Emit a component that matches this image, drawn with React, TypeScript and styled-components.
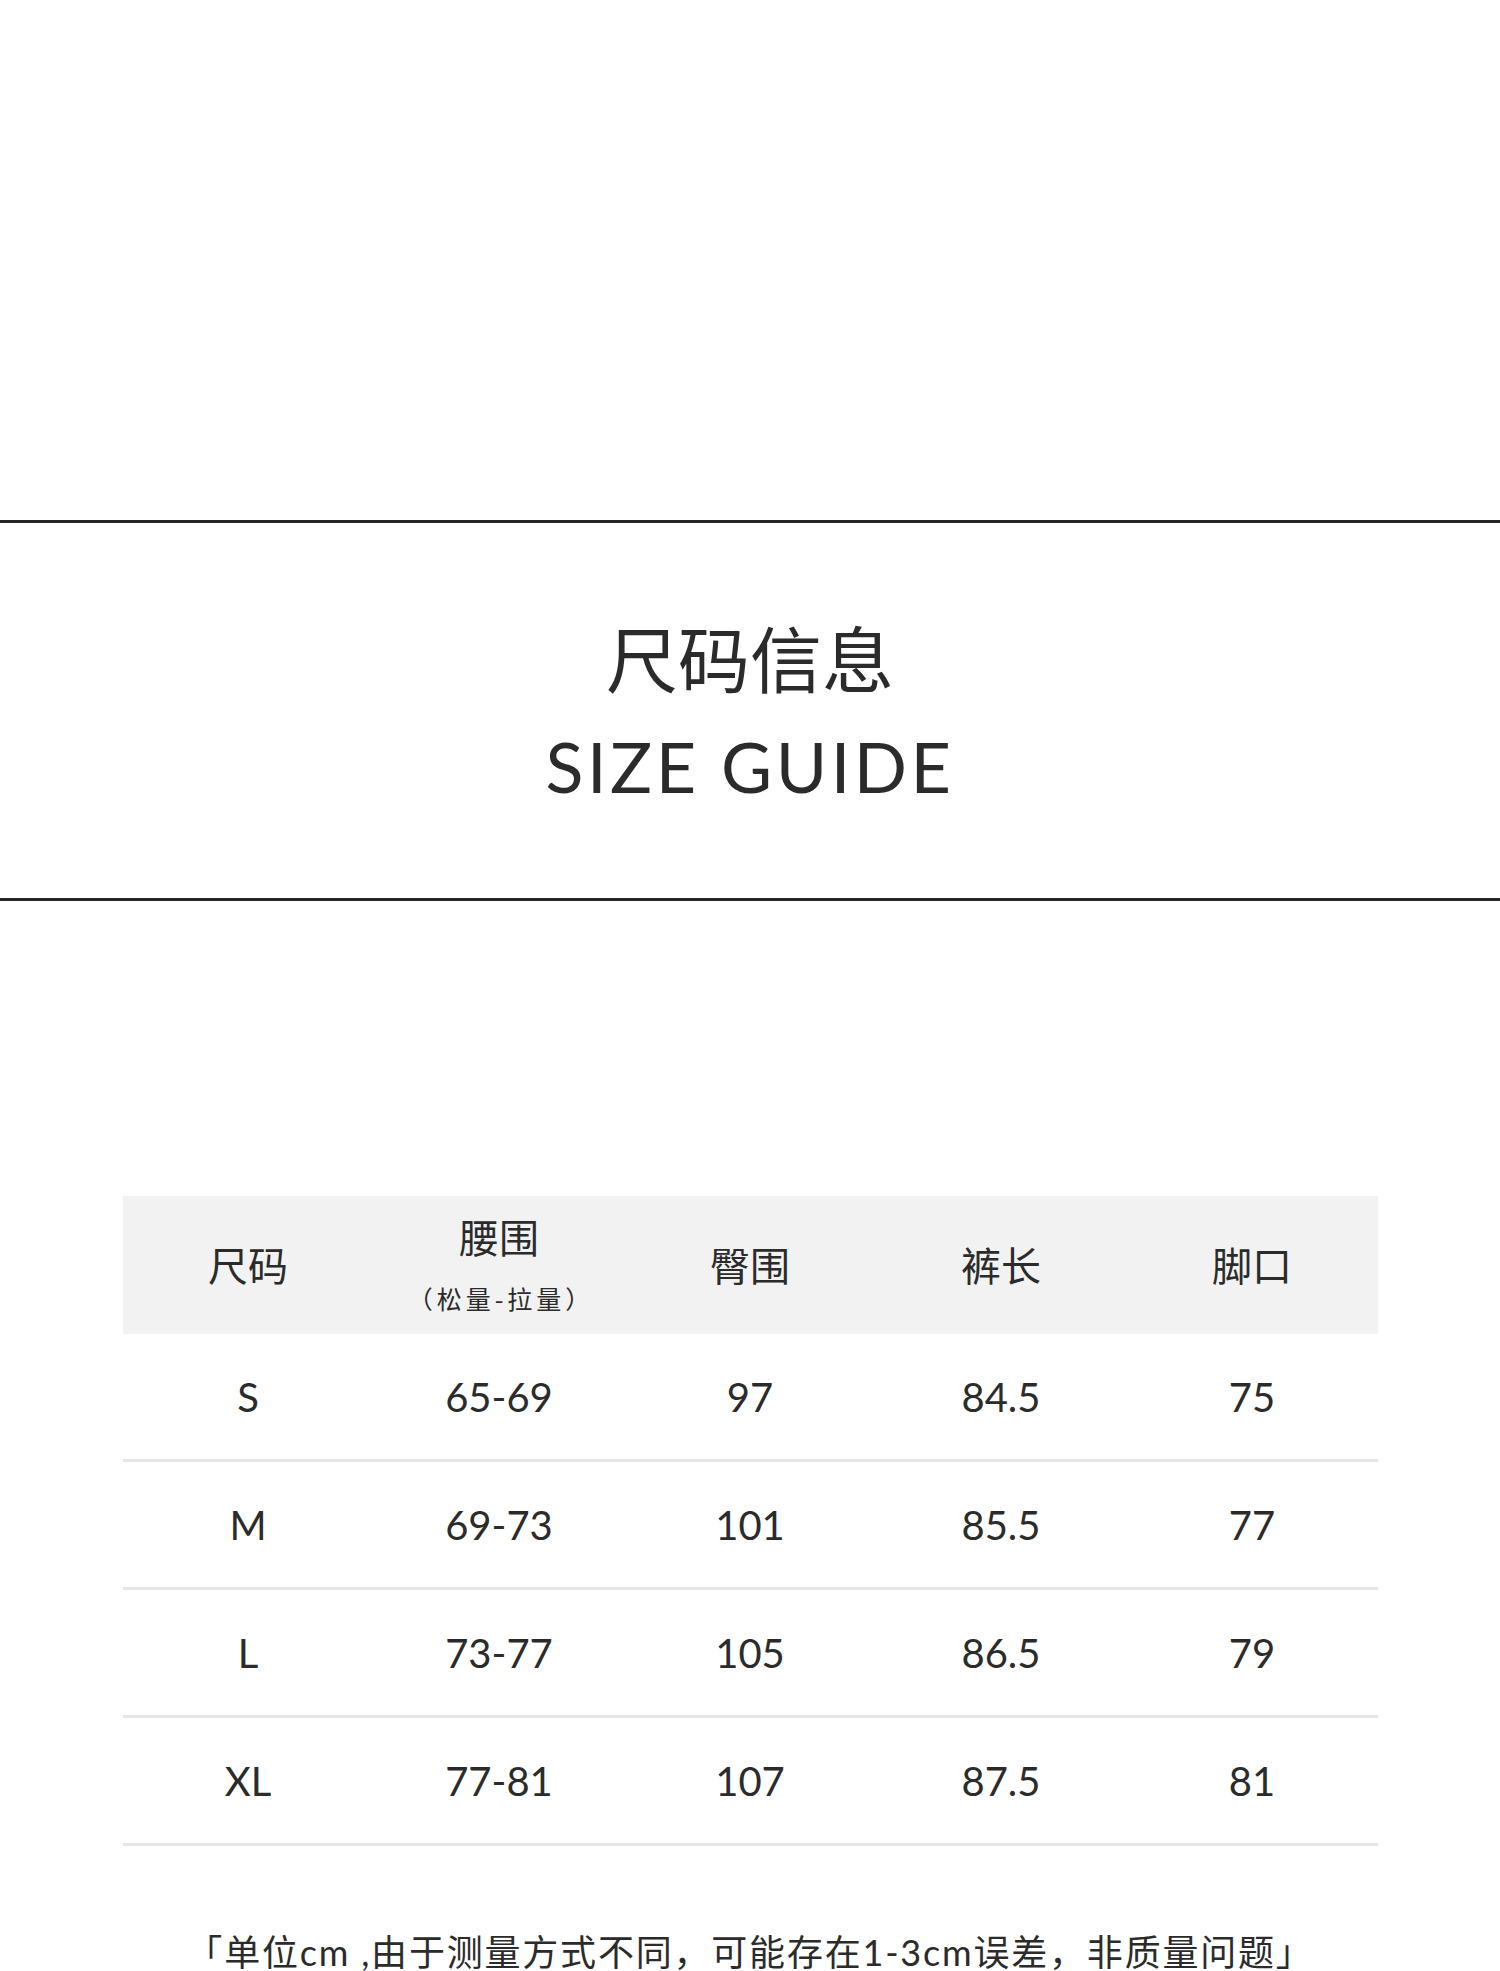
import React from "react";
import styled, { createGlobalStyle } from "styled-components";

const GlobalStyle = createGlobalStyle`
  html, body {
    margin: 0;
    padding: 0;
    background: #ffffff;
  }
  body {
    font-family: "Noto Sans CJK SC", "Noto Sans", sans-serif;
    color: #2b2b2b;
  }
`;

const Page = styled.div`
  width: 1500px;
  height: 1971px;
  overflow: hidden;
  background: #ffffff;
  display: flex;
  flex-direction: column;
`;

const TopSpace = styled.div`
  height: 520px;
  flex: none;
`;

const Divider = styled.div`
  height: 3px;
  flex: none;
  background: #262626;
`;

const TitleBlock = styled.header`
  height: 375px;
  flex: none;
  box-sizing: border-box;
  padding-top: 97px;
  display: flex;
  flex-direction: column;
  align-items: center;
  gap: 39px;
`;

const TitleCn = styled.h1`
  margin: 0;
  font-family: "Noto Sans CJK SC", sans-serif;
  font-weight: 400;
  font-size: 72px;
  line-height: 1;
  color: #2b2b2b;
`;

const TitleEn = styled.h2`
  margin: 0;
  font-family: "Lato", "Noto Sans", sans-serif;
  font-weight: 400;
  font-size: 70px;
  line-height: 1;
  letter-spacing: 3.5px;
  color: #2b2b2b;
`;

const Gap = styled.div<{ $h: number }>`
  height: ${(p) => p.$h}px;
  flex: none;
`;

const Table = styled.div`
  width: 1255px;
  margin: 0 auto;
  flex: none;
`;

const HeaderRow = styled.div`
  display: grid;
  grid-template-columns: repeat(5, 1fr);
  height: 138px;
  background: #f2f2f2;
`;

const HeadCell = styled.div`
  display: flex;
  flex-direction: column;
  align-items: center;
  justify-content: center;
  gap: 30px;
  padding-bottom: 3px;
  font-family: "Noto Sans CJK SC", sans-serif;
  font-size: 40px;
  line-height: 1;
  color: #2b2b2b;
`;

const HeadTitle = styled.span`
  display: block;
`;

const HeadSub = styled.span`
  display: block;
  font-size: 25px;
  line-height: 1;
  letter-spacing: 4px;
  margin-right: -4px;
`;

const BodyRow = styled.div`
  display: grid;
  grid-template-columns: repeat(5, 1fr);
  height: 125px;
  border-bottom: 3px solid #e6e6e6;
`;

const Cell = styled.div`
  display: flex;
  align-items: center;
  justify-content: center;
  font-family: "Lato", "Noto Sans", sans-serif;
  font-size: 40px;
  line-height: 1;
  color: #2b2b2b;
`;

const Note = styled.p`
  margin: 88px 0 0;
  text-align: center;
  font-family: "Lato", "Noto Sans CJK SC", sans-serif;
  font-size: 36px;
  line-height: 1;
  color: #2b2b2b;
  letter-spacing: 1.8px;
`;

const headers = ["尺码", "腰围", "臀围", "裤长", "脚口"];

const rows = [
  ["S", "65-69", "97", "84.5", "75"],
  ["M", "69-73", "101", "85.5", "77"],
  ["L", "73-77", "105", "86.5", "79"],
  ["XL", "77-81", "107", "87.5", "81"],
];

export default function App() {
  return (
    <>
      <GlobalStyle />
      <Page>
        <TopSpace />
        <Divider />
        <TitleBlock>
          <TitleCn>尺码信息</TitleCn>
          <TitleEn>SIZE GUIDE</TitleEn>
        </TitleBlock>
        <Divider />
        <Gap $h={295} />
        <Table>
          <HeaderRow>
            {headers.map((h) => (
              <HeadCell key={h}>
                <HeadTitle>{h}</HeadTitle>
                {h === "腰围" && <HeadSub>（松量-拉量）</HeadSub>}
              </HeadCell>
            ))}
          </HeaderRow>
          {rows.map((r) => (
            <BodyRow key={r[0]}>
              {r.map((v, i) => (
                <Cell key={i}>{v}</Cell>
              ))}
            </BodyRow>
          ))}
        </Table>
        <Note>「单位cm ,由于测量方式不同，可能存在1-3cm误差，非质量问题」</Note>
      </Page>
    </>
  );
}
